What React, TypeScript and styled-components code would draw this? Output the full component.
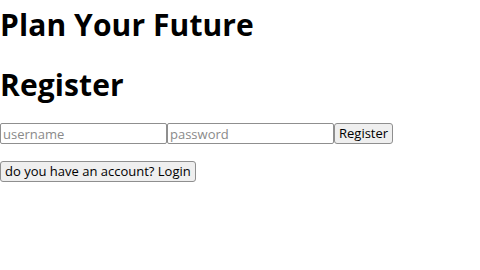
import styled, { createGlobalStyle } from 'styled-components';

const Global = createGlobalStyle`
  html, body {
    margin: 0;
    padding: 0;
    background: #ffffff;
  }
`;

const Page = styled.div`
  display: flex;
  flex-direction: column;
  align-items: flex-start;
  padding-top: 6px;
  color: #000;
`;

const Heading = styled.h1<{ $after: number }>`
  margin: 0 0 ${(p) => p.$after}px;
  font-family: 'Open Sans', 'DejaVu Sans', sans-serif;
  font-weight: 700;
  font-size: 30px;
  line-height: 37px;
  letter-spacing: 0.1px;
`;

const Form = styled.form`
  display: flex;
  align-items: center;
  margin: 0 0 17px;
`;

const Field = styled.input`
  box-sizing: border-box;
  width: 167px;
  height: 21px;
  margin: 0;
  padding: 1px 2px;
  border: 1px solid #8f8f8f;
  border-radius: 2px;
  font-family: 'Open Sans', 'DejaVu Sans', sans-serif;
  font-size: 13px;
  color: #000;
  background: #fff;

  &::placeholder {
    color: #8a8a8a;
  }
`;

const Button = styled.button`
  box-sizing: border-box;
  height: 21px;
  margin: 0;
  padding: 0 4px;
  border: 1px solid #8f8f8f;
  border-radius: 3px;
  background: #efefef;
  color: #000;
  font-family: 'Open Sans', 'DejaVu Sans', sans-serif;
  font-size: 13px;
  line-height: 19px;
  cursor: pointer;
`;

export default function App() {
  return (
    <Page>
      <Global />
      <Heading $after={23}>Plan Your Future</Heading>
      <Heading $after={20}>Register</Heading>
      <Form onSubmit={(e) => e.preventDefault()}>
        <Field type="text" placeholder="username" />
        <Field type="password" placeholder="password" />
        <Button type="submit">Register</Button>
      </Form>
      <Button type="button">do you have an account? Login</Button>
    </Page>
  );
}
